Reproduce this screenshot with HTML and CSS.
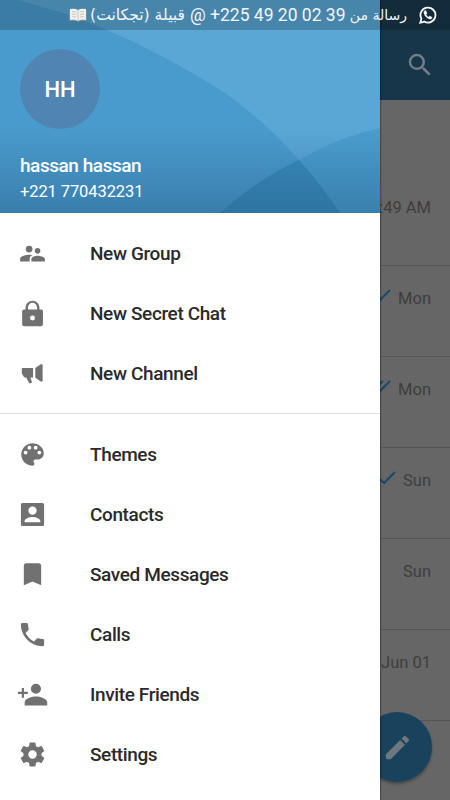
FILE: index.html
```html
<!DOCTYPE html>
<html lang="en">
<head>
<meta charset="utf-8">
<title>Chats</title>
<link rel="stylesheet" href="styles.css">
</head>
<body>
<div class="screen">
  <main class="chats">
    <header class="toolbar">
      <svg class="search" viewBox="0 0 24 24"><path d="M15.5 14h-.79l-.28-.27A6.47 6.47 0 0 0 16 9.5 6.5 6.5 0 1 0 9.5 16c1.61 0 3.09-.59 4.23-1.57l.27.28v.79l5 4.99L20.49 19l-4.99-5zm-6 0C7.01 14 5 11.99 5 9.5S7.01 5 9.5 5 14 7.01 14 9.5 11.99 14 9.5 14z"/></svg>
    </header>
    <div class="chat first"><span>8:49 AM</span></div>
    <div class="chat"><svg class="check" viewBox="0 0 20 16"><path d="M3 9l4 4L18 2"/></svg><span>Mon</span></div>
    <div class="chat"><svg class="check" viewBox="0 0 20 16"><path d="M3 9l4 4L18 2M0 12L11 2"/></svg><span>Mon</span></div>
    <div class="chat"><svg class="check" viewBox="0 0 20 16"><path d="M3 9l4 4L18 2"/></svg><span>Sun</span></div>
    <div class="chat"><span>Sun</span></div>
    <div class="chat"><span>Jun 01</span></div>
    <div class="fab"><svg viewBox="0 0 24 24"><path d="M3 17.25V20q0 1 1 1h2.75L17.81 9.94l-3.75-3.75zM20.71 7.04a1 1 0 0 0 0-1.41l-2.34-2.34a1 1 0 0 0-1.41 0l-1.83 1.83 3.75 3.75z"/></svg></div>
  </main>

  <aside class="drawer">
    <div class="profile">
      <svg class="wallpaper" viewBox="0 0 380 213" preserveAspectRatio="none">
        <path class="light" d="M0-4Q55 8 105 29Q166 55 225 93Q266 122 299 160Q323 187 340 213H380V0H0z"/>
        <path class="wave" d="M220 213Q258 179 299 160Q338 137 380 128V213z"/>
        <path class="cross" d="M220 213Q258 179 299 160Q323 187 340 213z"/>
      </svg>
      <div class="avatar">HH</div>
      <div class="name">hassan hassan</div>
      <div class="phone">+221 770432231</div>
    </div>
    <nav class="menu">
      <div class="item"><svg viewBox="0 0 24 24"><path d="M16.5 12a2.5 2.5 0 1 0 0-5 2.5 2.5 0 0 0 0 5zM9 11a3 3 0 1 0 0-6 3 3 0 0 0 0 6zm7.5 3c-1.83 0-5.5.92-5.5 2.75V19h12v-2.25c0-1.83-4.67-2.75-6.500-2.750zM9 13c-2.33 0-8 1.17-8 3.500V19h8.500v-2.250c0-.850.330-2.340 2.370-3.470C10.500 13.100 9.660 13 9 13z"/></svg><span>New Group</span></div>
      <div class="item"><svg viewBox="0 0 24 24"><path d="M20 8.500h-1.800V6.800A6.200 6.200 0 0 0 5.800 6.800v1.700H4.500A1.800 1.800 0 0 0 2.800 10.300v11.200c0 1 .8 1.800 1.700 1.800h15a1.800 1.800 0 0 0 1.800-1.800V10.300c0-1-.3-1.800-1.300-1.800zM12 18.200a2.200 2.200 0 1 1 0-4.400 2.200 2.200 0 0 1 0 4.400zm4-9.700H8V6.500a4 4 0 0 1 8 0z"/></svg><span>New Secret Chat</span></div>
      <div class="item"><svg viewBox="0 0 24 24"><path d="M3 7h9.500v8.600h-2.300l1.400 4.300-2.300 1-2.900-5.300H4.700L2.500 12V7.500zM14.500 7.200L19 3.900q2-1.200 2 1v13.200q0 2.100-2 .8l-4.500-3.200z"/></svg><span>New Channel</span></div>
      <div class="divider"></div>
      <div class="item"><svg viewBox="0 0 24 24"><path d="M12 2C6.500 2 2 6.500 2 12s4.500 10 10 10c.9 0 1.700-.7 1.700-1.700 0-.4-.2-.8-.4-1.100-.3-.3-.4-.7-.4-1.100 0-.9.700-1.700 1.700-1.700h2c3 0 5.400-2.400 5.400-5.400C22 5.900 17.500 2 12 2zM5.900 12a1.700 1.700 0 1 1 0-3.400 1.700 1.700 0 0 1 0 3.400zm3.300-4.400a1.700 1.700 0 1 1 0-3.400 1.700 1.700 0 0 1 0 3.400zm5.600 0a1.700 1.700 0 1 1 0-3.400 1.700 1.700 0 0 1 0 3.400zm3.300 4.400a1.700 1.700 0 1 1 0-3.400 1.700 1.700 0 0 1 0 3.400z"/></svg><span>Themes</span></div>
      <div class="item"><svg viewBox="0 0 24 24"><path d="M1.700 3.200C1.700 2.400 2.400 1.700 3.200 1.700h17.600c.8 0 1.500.7 1.500 1.500v17.600c0 .8-.7 1.500-1.500 1.500H3.200c-.8 0-1.500-.7-1.500-1.500zM12 12.300a3.700 3.700 0 1 0 0-7.400 3.700 3.700 0 0 0 0 7.400zM5 18.800h14v-1c0-2.300-4.700-3.600-7-3.600s-7 1.300-7 3.600z"/></svg><span>Contacts</span></div>
      <div class="item"><svg viewBox="0 0 24 24"><path d="M6.300 2h11.400c1.100 0 2 .9 2 2v17.500L12 18.200l-7.700 3.300V4c0-1.100.9-2 2-2z"/></svg><span>Saved Messages</span></div>
      <div class="item"><svg class="call" viewBox="0 0 24 24"><path d="M6.620 10.790c1.440 2.830 3.760 5.140 6.590 6.590l2.200-2.200c.27-.27.67-.36 1.020-.24 1.120.37 2.330.57 3.570.57.55 0 1 .45 1 1V20c0 .55-.45 1-1 1C10.610 21 3 13.390 3 4c0-.55.45-1 1-1h3.500c.55 0 1 .45 1 1 0 1.250.2 2.450.57 3.570.11.35.03.74-.25 1.020z"/></svg><span>Calls</span></div>
      <div class="item"><svg class="invite" viewBox="0 0 24 24"><path d="M14.500 11.500a3.700 3.700 0 1 0 0-7.400 3.700 3.700 0 0 0 0 7.400zM5.800 10V7.200H4.200V10H1.400v1.600h2.800v2.800h1.600v-2.800h2.800V10zM14.500 13.500c-2.700 0-8.200 1.300-8.200 4.200V20h16.400v-2.300c0-2.900-5.500-4.200-8.200-4.200z"/></svg><span>Invite Friends</span></div>
      <div class="item"><svg class="gear" viewBox="0 0 24 24"><path d="M19.430 12.980a7.800 7.800 0 0 0 0-1.960l2.110-1.650a.5.5 0 0 0 .12-.64l-2-3.460a.5.5 0 0 0-.61-.22l-2.490 1a7.300 7.300 0 0 0-1.690-.98l-.38-2.650A.49.49 0 0 0 14 2h-4a.49.49 0 0 0-.49.420l-.38 2.650c-.61.25-1.170.59-1.690.98l-2.490-1a.49.49 0 0 0-.61.220l-2 3.460a.49.49 0 0 0 .12.640l2.110 1.650a7.900 7.900 0 0 0 0 1.960l-2.110 1.650a.5.5 0 0 0-.12.640l2 3.460c.12.220.39.300.61.220l2.490-1c.52.400 1.080.730 1.690.980l.38 2.650c.03.240.240.420.490.420h4c.25 0 .46-.180.490-.420l.38-2.650c.61-.250 1.170-.590 1.690-.980l2.490 1c.23.090.49 0 .61-.220l2-3.460a.5.5 0 0 0-.12-.640zM12 15.500a3.500 3.500 0 1 1 0-7 3.500 3.500 0 0 1 0 7z"/></svg><span>Settings</span></div>
    </nav>
  </aside>

  <div class="status" dir="rtl">
    <svg class="whatsapp" viewBox="0 0 18 18"><path d="M1.300 16.700l1.100-4A7.500 7.500 0 1 1 5.300 15.600z"/><path class="handset" d="M5.900 4.400c-1 .6-1.500 1.600-1.100 2.900.9 3.100 3 5.200 5.700 5.900 1.400.3 2.800-.6 2.800-2l-2.600-1.400-1.200 1.100C8.500 10.400 7.800 9.600 7.200 8.500l1-1.100-1.100-2.800q-.5-.5-1.200-.2z"/></svg>
    <span class="arabic">رسالة من</span>
    <span class="number" dir="ltr">@ +225 49 20 02 39</span>
    <span class="arabic tribe">قبيلة (تجكانت)</span>
    <svg class="book" viewBox="0 0 18 14"><path class="cover" d="M0 2h1v10h7l1 1 1-1h7V2h1v11h-7l-2 1-2-1H0z"/><path class="pages" d="M1 1q5-1 8 1 3-2 8-1v11q-5-1-8 1-3-2-8-1z"/><path class="lines" d="M9 2v11M3 3.500l4 .5M3 6l4 .5M3 8.500l4 .5M15 3.500l-4 .5M15 6l-4 .5M15 8.500l-4 .5"/></svg>
  </div>
</div>
</body>
</html>
```
FILE: styles.css
```css
* { box-sizing: border-box; }
body { margin: 0; font-family: Roboto, "DejaVu Sans", sans-serif; }
.screen { position: relative; width: 450px; height: 800px; overflow: hidden; background: #666; }

.chats { height: 800px; }
.toolbar { height: 100px; padding: 30px 15px 0 0; display: flex; align-items: center; justify-content: flex-end; background: #18364a; }
.search { width: 30px; height: 30px; fill: #737f86; }
.chat { height: 91px; padding: 22px 19px 0 0; display: flex; justify-content: flex-end; align-items: flex-start; gap: 6px; border-bottom: 1px solid #565656; color: #3e3e3e; font-size: 16.500px; line-height: 22px; }
.chat.first { height: 166px; padding-top: 97px; }
.check { width: 20px; height: 16px; fill: none; stroke: #174b67; stroke-width: 2; }
.fab { position: absolute; left: 362px; top: 712px; width: 70px; height: 70px; border-radius: 50%; background: #19435d; display: flex; align-items: center; justify-content: center; box-shadow: 0 2px 3px rgba(0,0,0,.3); }
.fab svg { width: 31px; height: 31px; fill: #6d777d; }

.drawer { position: absolute; left: 0; top: 0; width: 380px; height: 800px; background: #fff; box-shadow: 0 0 2px rgba(0,0,0,.9); }
.profile { position: relative; height: 213px; padding: 49px 20px 0; color: #fff; background: #4a9bcd; }
.profile::before { content: ""; position: absolute; inset: 128px 0 0; z-index: 1; background: linear-gradient(rgba(30,80,120,0), rgba(30,80,120,.38)); }
.wallpaper { position: absolute; inset: 0; width: 380px; height: 213px; }
.light { fill: #5aa7d6; }
.wave { fill: #4a9dce; }
.cross { fill: #388abb; }
.avatar, .name, .phone { position: relative; z-index: 2; }
.avatar { width: 80px; height: 80px; border-radius: 50%; background: #5085b3; display: flex; align-items: center; justify-content: center; font-size: 22px; font-weight: 500; }
.name { margin-top: 25px; font-size: 19px; line-height: 24px; font-weight: 500; letter-spacing: -.45px; }
.phone { margin-top: 3px; font-size: 16.500px; line-height: 22px; letter-spacing: -.1px; }

.menu { padding-top: 10px; }
.item { height: 60px; padding-left: 19px; display: flex; align-items: center; gap: 44px; color: #2a2a2a; font-size: 19px; font-weight: 500; letter-spacing: -.38px; }
.item svg { width: 27px; height: 27px; fill: #717171; fill-rule: evenodd; flex: none; }
.item .call { width: 31px; height: 31px; margin: 0 -2px; }
.item .invite { width: 33px; height: 33px; margin: 0 -3px; }
.item .gear { width: 29px; height: 29px; margin: 0 -1px; }
.divider { height: 1px; margin: 10px 0; background: #ddd; }

.status { position: absolute; left: 0; top: 0; width: 450px; height: 30px; padding-right: 13px; display: flex; align-items: center; color: #f1f7fa; background: rgba(0,0,0,.2); white-space: nowrap; }
.whatsapp { width: 18px; height: 18px; fill: none; stroke: #f4f6f7; stroke-width: 1.800; }
.whatsapp .handset { fill: #f4f6f7; stroke: none; }
.arabic { margin-right: 12px; width: 56px; font-family: "DejaVu Sans", sans-serif; font-size: 14px; }
.number { margin-right: 5px; width: 156px; font-size: 17.500px; }
.tribe { margin-right: 5px; width: 95px; font-size: 15.600px; }
.book { width: 18px; height: 14px; margin-right: 3px; }
.book .cover { fill: #788b93; }
.book .pages { fill: #f0efe9; }
.book .lines { fill: none; stroke: #b4bbbd; stroke-width: .7; }
```
